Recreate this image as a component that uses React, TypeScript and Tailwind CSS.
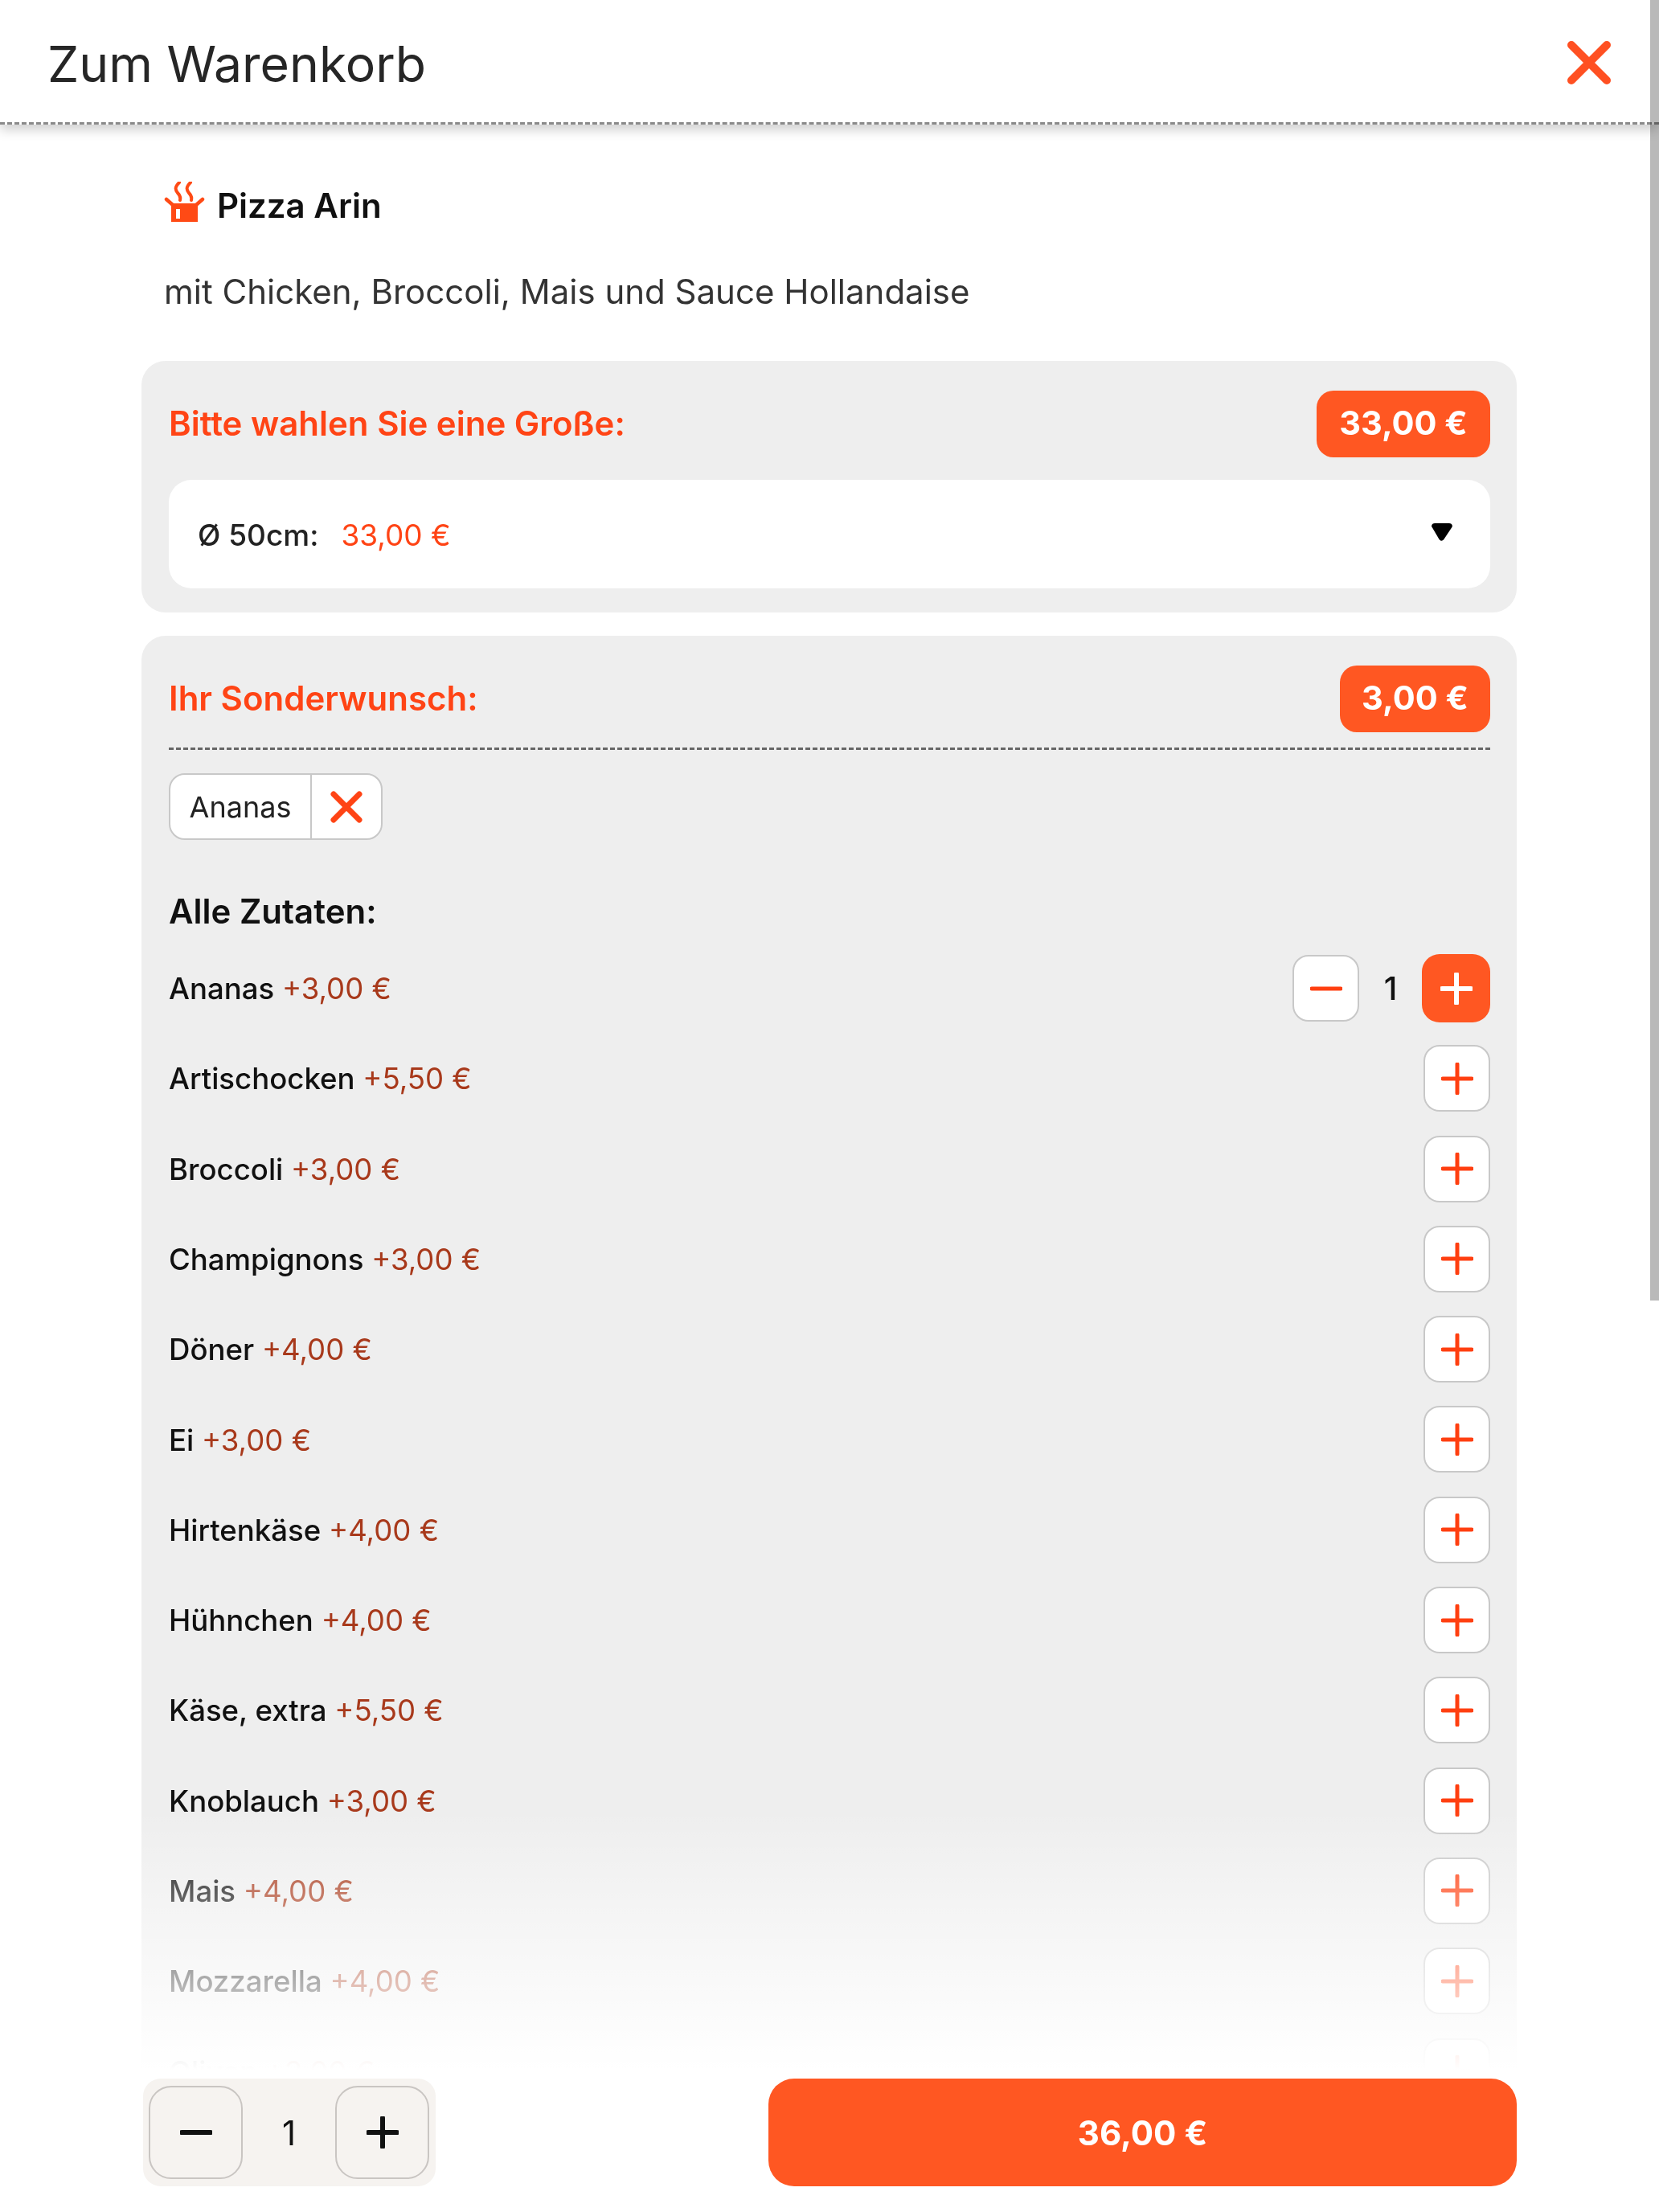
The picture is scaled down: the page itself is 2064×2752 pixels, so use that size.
import React from "react";

const items: [string, string][] = [
  ["Ananas", "+3,00 €"],
  ["Artischocken", "+5,50 €"],
  ["Broccoli", "+3,00 €"],
  ["Champignons", "+3,00 €"],
  ["Döner", "+4,00 €"],
  ["Ei", "+3,00 €"],
  ["Hirtenkäse", "+4,00 €"],
  ["Hühnchen", "+4,00 €"],
  ["Käse, extra", "+5,50 €"],
  ["Knoblauch", "+3,00 €"],
  ["Mais", "+4,00 €"],
  ["Mozzarella", "+4,00 €"],
  ["Oliven", "+3,00 €"],
];

function Plus({ color, size = 40, w = 5 }: { color: string; size?: number; w?: number }) {
  return (
    <svg width={size} height={size} viewBox="0 0 40 40" fill="none">
      <path d="M20 2v36M2 20h36" stroke={color} strokeWidth={w} strokeLinecap="round" />
    </svg>
  );
}

function Minus({ color, size = 40, w = 5 }: { color: string; size?: number; w?: number }) {
  return (
    <svg width={size} height={size} viewBox="0 0 40 40" fill="none">
      <path d="M2 20h36" stroke={color} strokeWidth={w} strokeLinecap="round" />
    </svg>
  );
}

export default function App() {
  return (
    <div className="relative w-[2064px] h-[2752px] overflow-hidden bg-white font-['Inter',sans-serif]">
      <header className="relative z-10 h-[155px] flex items-center justify-between pl-[59px] pr-[60px] pt-[4px] bg-white border-b-[3px] border-dashed border-[#8a8a8a] shadow-[0_6px_14px_rgba(0,0,0,0.2)]">
        <h1 className="text-[62.5px] leading-none font-normal text-[#262626] pt-[2px]">Zum Warenkorb</h1>
        <svg width="54" height="54" viewBox="0 0 54 54" fill="none">
          <path d="M5 5L49 49M49 5L5 49" stroke="#ff5022" strokeWidth="10" strokeLinecap="round" />
        </svg>
      </header>

      <main className="pl-[176px] pr-[177px]">
        <div className="pl-[28px] pt-[71px] h-[294px]">
          <div className="flex items-center gap-[15px] h-[50px]">
            <svg width="51" height="50" viewBox="0 0 51 50" fill="none">
              <path d="M19 1C13 7 14 10 17 14C20 17 21 19 20 23" stroke="#ff4a15" strokeWidth="4" strokeLinecap="round" />
              <path d="M33 1C27 7 28 10 31 14C34 17 35 19 34 23" stroke="#ff4a15" strokeWidth="4" strokeLinecap="round" />
              <path d="M3 22L11 29M48 22L40 29" stroke="#ff4a15" strokeWidth="4.5" strokeLinecap="round" />
              <path d="M9 27h33v23H9z M15 34v12h5V34z" fill="#ff4a15" fillRule="evenodd" />
            </svg>
            <span className="text-[42px] leading-none font-semibold text-[#111] pt-[10px]">Pizza Arin</span>
          </div>
          <p className="mt-[66px] text-[42px] leading-none text-[#333]">mit Chicken, Broccoli, Mais und Sauce Hollandaise</p>
        </div>

        <section className="h-[313px] rounded-[30px] bg-[#eeeeee] pl-[34px] pr-[33px] pt-[37px]">
          <div className="flex items-center justify-between h-[83px]">
            <span className="text-[42px] font-semibold text-[#ff4415] pb-[3px]">Bitte wahlen Sie eine Große:</span>
            <span className="h-[83px] w-[216px] rounded-[21px] bg-[#ff5722] flex items-center justify-center text-[41.500px] font-bold text-white pb-[2px]">33,00 €</span>
          </div>
          <div className="mt-[28px] h-[135px] rounded-[28px] bg-white flex items-center justify-between pl-[36px] pr-[46px]">
            <span className="flex items-center gap-[28px] text-[37px] pt-[2px]">
              <span className="font-medium text-[#222]">Ø 50cm:</span>
              <span className="text-[#ff4415]">33,00 €</span>
            </span>
            <svg width="28" height="24" viewBox="0 0 28 24" className="-mt-[6px]">
              <path d="M5 1h18c3.5 0 5 3.5 3 5.500L17 20c-2 3.500-4.500 3.500-6.500 1L2 6.500C0 4.500 1.500 1 5 1z" fill="#000" />
            </svg>
          </div>
        </section>

        <section className="mt-[29px] rounded-[30px] bg-[#eeeeee] pl-[34px] pr-[33px] pt-[37px]">
          <div className="flex items-center justify-between h-[83px]">
            <span className="text-[42px] font-semibold text-[#ff4415] pb-[3px]">Ihr Sonderwunsch:</span>
            <span className="h-[83px] w-[187px] rounded-[21px] bg-[#ff5722] flex items-center justify-center text-[41.500px] font-bold text-white pb-[2px]">3,00 €</span>
          </div>
          <div className="mt-[19px] border-t-[3px] border-dashed border-[#666]" />
          <div className="mt-[29px] inline-flex h-[83px] rounded-[20px] border-[2px] border-[#c8c8c8] bg-white align-top">
            <span className="w-[176px] flex items-center justify-center text-[36px] text-[#222] border-r-[2px] border-[#c8c8c8]">Ananas</span>
            <span className="w-[86px] flex items-center justify-center">
              <svg width="40" height="40" viewBox="0 0 40 40" fill="none">
                <path d="M4 4L36 36M36 4L4 36" stroke="#ff4415" strokeWidth="7" strokeLinecap="round" />
              </svg>
            </span>
          </div>
          <h2 className="mt-[60px] h-[56px] flex items-center text-[42px] font-semibold text-[#111]">Alle Zutaten:</h2>

          <ul className="mt-[27px] flex flex-col gap-[29.3px]">
            {items.map(([name, price], i) => (
              <li key={name} className="flex items-center justify-between h-[83px]">
                <span className="text-[36.6px] font-medium text-[#111] pt-[2px]">
                  {name} <span className="font-normal text-[#a8391b]">{price}</span>
                </span>
                {i === 0 ? (
                  <div className="flex items-center">
                    <button className="w-[83px] h-[83px] rounded-[20px] border-[2px] border-[#c8c8c8] bg-white flex items-center justify-center">
                      <Minus color="#ff3f10" />
                    </button>
                    <span className="w-[78px] text-center text-[40px] font-medium text-[#111]">1</span>
                    <button className="w-[85px] h-[85px] rounded-[22px] bg-[#ff5722] flex items-center justify-center">
                      <Plus color="#ffffff" w={6} />
                    </button>
                  </div>
                ) : (
                  <button className="w-[83px] h-[83px] rounded-[20px] border-[2px] border-[#c8c8c8] bg-white flex items-center justify-center">
                    <Plus color="#ff3f10" />
                  </button>
                )}
              </li>
            ))}
          </ul>
          <div className="h-[200px]" />
        </section>
      </main>

      <div className="absolute left-0 right-0 top-[2250px] h-[325px] bg-gradient-to-b from-white/0 to-white" />
      <div className="absolute left-0 right-0 top-[2575px] bottom-0 bg-white" />

      <div className="absolute left-[176px] w-[1711px] bottom-[32px] h-[134px] flex items-stretch justify-between">
        <div className="ml-[2px] w-[364px] rounded-[22px] bg-[#f6f3f0] flex items-center justify-between pl-[7px] pr-[8px]">
          <button className="w-[117px] h-[116px] rounded-[28px] border-[2px] border-[#c9c5c2] flex items-center justify-center">
            <Minus color="#111" w={6} />
          </button>
          <span className="text-[42px] text-[#111]">1</span>
          <button className="w-[117px] h-[116px] rounded-[28px] border-[2px] border-[#c9c5c2] flex items-center justify-center">
            <Plus color="#111" w={6} />
          </button>
        </div>
        <button className="w-[931px] rounded-[32px] bg-[#ff5722] text-[42px] font-bold text-white">36,00 €</button>
      </div>

      <div className="absolute z-20 right-0 top-0 w-[11px] h-[1618px] bg-[#b9b9b9] mix-blend-multiply" />
    </div>
  );
}
